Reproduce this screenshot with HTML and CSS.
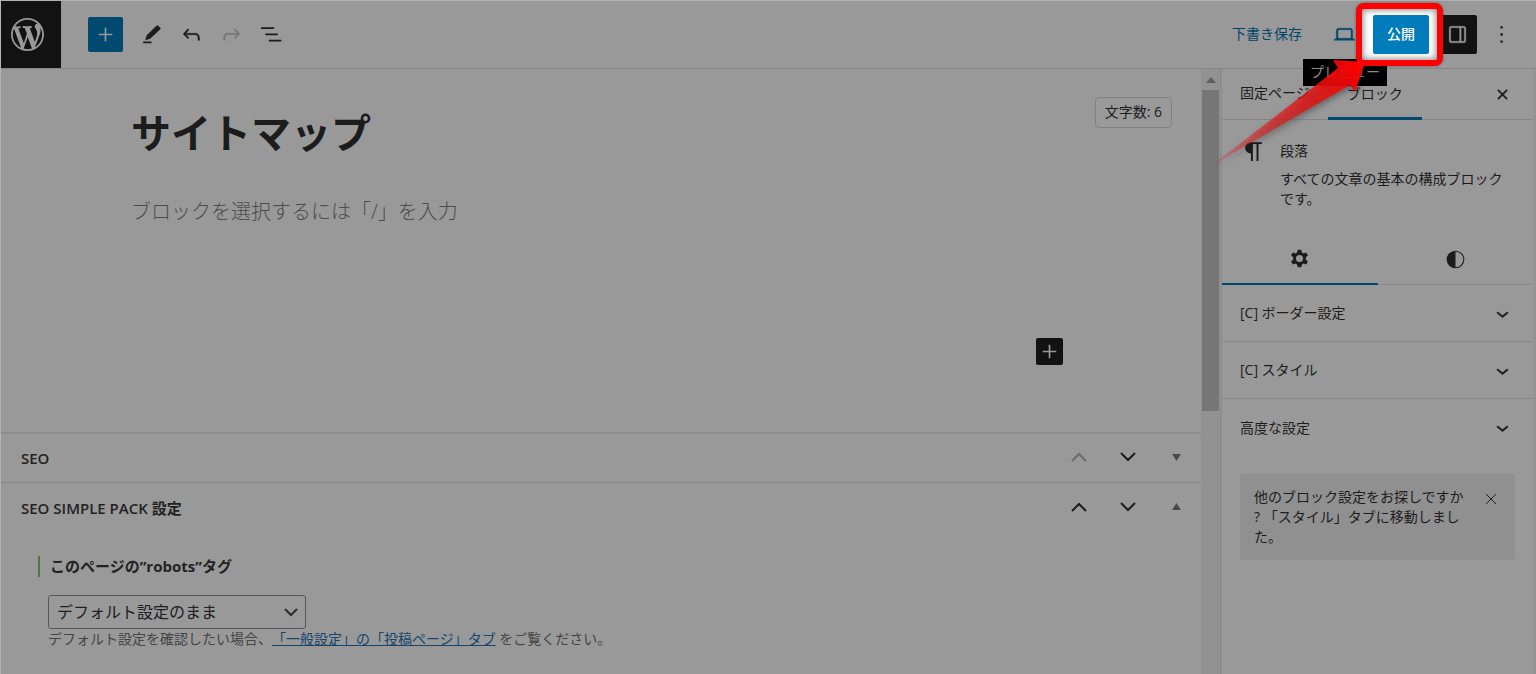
FILE: index.html
```html
<!DOCTYPE html>
<html lang="ja">
<head>
<meta charset="utf-8">
<title>サイトマップ</title>
<link rel="stylesheet" href="styles.css">
</head>
<body>
<div class="app">
  <header class="header">
    <a class="wp-logo" href="#" aria-label="WordPress"><svg viewBox="0 0 20 20"><path d="M20 10c0-5.51-4.49-10-10-10C4.48 0 0 4.49 0 10c0 5.52 4.48 10 10 10 5.51 0 10-4.48 10-10zM7.78 15.37L4.37 6.22c.55-.02 1.17-.08 1.17-.08.5-.06.44-1.13-.06-1.11 0 0-1.45.11-2.37.11-.18 0-.37 0-.58-.01C4.12 2.69 6.87 1.11 10 1.11c2.33 0 4.45.87 6.05 2.34-.68-.11-1.65.39-1.65 1.58 0 .74.45 1.36.9 2.1.35.61.55 1.36.55 2.46 0 1.49-1.4 5-1.4 5l-3.03-8.37c.54-.02.82-.17.82-.17.5-.05.44-1.25-.06-1.22 0 0-1.44.12-2.38.12-.87 0-2.33-.12-2.33-.12-.5-.03-.56 1.2-.06 1.22l.92.08 1.26 3.41zM17.41 10c.24-.64.74-1.87.43-4.25.7 1.29 1.05 2.71 1.05 4.25 0 3.29-1.73 6.24-4.4 7.78.97-2.59 1.94-5.2 2.92-7.78zM6.1 18.09C3.12 16.65 1.11 13.53 1.11 10c0-1.3.23-2.48.72-3.59C3.25 10.3 4.67 14.2 6.1 18.09zm4.03-6.63l2.58 6.98c-.86.29-1.76.45-2.71.45-.79 0-1.57-.11-2.29-.33.81-2.38 1.62-4.74 2.42-7.1z"/></svg></a>
    <div class="tools">
      <button class="inserter" aria-label="ブロック挿入"><svg class="icon" viewBox="0 0 24 24"><path d="M18.500 11.200h-5.700V5.500h-1.600v5.700H5.500v1.600h5.700v5.700h1.600v-5.700h5.700z"/></svg></button>
      <button class="tool" aria-label="ツール"><svg class="icon" viewBox="0 0 24 24"><path d="M21 6.200l-3-3.200-1.800 1L7.400 12.800l-1.400 4.600 4.600-1.400L19.700 7.600zM12 18.700H4v1.700h8z"/></svg></button>
      <button class="tool" aria-label="元に戻す"><svg class="icon" viewBox="0 0 24 24"><path d="M18.3 11.7c-.6-.6-1.4-.9-2.3-.9H6.700l2.900-3.300-1.100-1-4.500 5L8.500 16l1-1-2.700-2.700H16c.5 0 .9.2 1.300.5 1 1 1 3.400 1 4.500v.3h1.500v-.2c0-1.500 0-4.300-1.500-5.700z" stroke="currentColor" stroke-width=".4"/></svg></button>
      <button class="tool tool-off" aria-label="やり直す" disabled><svg class="icon" viewBox="0 0 24 24"><path d="M15.600 6.500l-1.100 1 2.900 3.300H8c-.9 0-1.700.3-2.300.9-1.400 1.500-1.400 4.200-1.400 5.600v.2h1.500v-.3c0-1.100 0-3.500 1-4.500.3-.3.7-.5 1.300-.5h9.200L14.500 15l1.100 1.100 4.600-4.600-4.600-5z" stroke="currentColor" stroke-width=".4"/></svg></button>
      <button class="tool" aria-label="リスト表示"><svg class="icon" viewBox="0 0 24 24"><path d="M2 5.100H14.500v1.700H2zM6 11.100h12v1.700H6zM9.500 17.100h12v1.700H9.500z"/></svg></button>
    </div>
    <div class="actions">
      <button class="save">下書き保存</button>
      <div class="preview">
        <button class="preview-button" aria-label="プレビュー"><svg class="icon" viewBox="0 0 24 24"><path d="M20.5 16h-.7V8c0-1.100-.9-2-2-2H6.200c-1.100 0-2 .9-2 2v8h-.7c-.8 0-1.500.7-1.500 1.500h20c0-.8-.7-1.500-1.500-1.500zM5.700 8c0-.3.2-.5.5-.5h11.600c.3 0 .5.2.5.5v7.600H5.700V8z" stroke="currentColor" stroke-width=".4"/></svg></button>
        <span class="tooltip">プレビュー</span>
      </div>
      <div class="callout">
        <button class="publish">公開</button>
        <svg class="arrow" viewBox="0 0 170 126" aria-hidden="true">
          <defs>
            <linearGradient id="fade" gradientUnits="userSpaceOnUse" x1="5" y1="116" x2="158" y2="12">
              <stop offset="0" stop-color="#e61414" stop-opacity=".15"/>
              <stop offset=".3" stop-color="#e61414" stop-opacity=".55"/>
              <stop offset=".7" stop-color="#e61010" stop-opacity=".85"/>
              <stop offset="1" stop-color="#ff0000"/>
            </linearGradient>
          </defs>
          <path d="M6 115 L133 17 L128 9 L160 11 L150 41 L145 34 Z" fill="url(#fade)"/>
        </svg>
      </div>
      <button class="panel-toggle" aria-label="設定"><svg class="icon" viewBox="0 0 24 24"><path d="M18 4H6c-1.100 0-2 .9-2 2v12c0 1.100.9 2 2 2h12c1.100 0 2-.9 2-2V6c0-1.100-.9-2-2-2zm-4 14.500H6c-.3 0-.5-.2-.5-.5V6c0-.3.2-.5.5-.5h8v13zm4.500-.5c0 .3-.2.5-.5.5h-2.500v-13H18c.3 0 .5.2.5.5v12z" stroke="currentColor" stroke-width=".3"/></svg></button>
      <button class="more" aria-label="オプション"><svg class="icon" viewBox="0 0 24 24"><path d="M11 4h2.200v2.200H11zM11 10.900h2.200v2.200H11zM11 17.800h2.200V20H11z"/></svg></button>
    </div>
  </header>

  <div class="body">
    <main class="editor">
      <section class="canvas">
        <div class="title-row">
          <h1 class="title">サイトマップ</h1>
          <span class="count">文字数: 6</span>
        </div>
        <p class="placeholder">ブロックを選択するには「/」を入力</p>
        <button class="add" aria-label="ブロックを追加"><svg class="icon" viewBox="0 0 24 24"><path d="M18.500 11.200h-5.700V5.500h-1.600v5.700H5.500v1.600h5.700v5.700h1.600v-5.700h5.700z"/></svg></button>
      </section>

      <section class="metabox">
        <h2 class="metabox-title">SEO</h2>
        <button class="move move-off" aria-label="上に移動" disabled><svg viewBox="0 0 18 18"><path d="M2 13l7-7 7 7"/></svg></button>
        <button class="move" aria-label="下に移動"><svg viewBox="0 0 18 18"><path d="M2 5l7 7 7-7"/></svg></button>
        <button class="fold" aria-label="開く"><svg viewBox="0 0 10 8"><path d="M0 0h10L5 8z"/></svg></button>
      </section>

      <section class="metabox">
        <h2 class="metabox-title">SEO SIMPLE PACK 設定</h2>
        <button class="move" aria-label="上に移動"><svg viewBox="0 0 18 18"><path d="M2 13l7-7 7 7"/></svg></button>
        <button class="move" aria-label="下に移動"><svg viewBox="0 0 18 18"><path d="M2 5l7 7 7-7"/></svg></button>
        <button class="fold" aria-label="閉じる"><svg viewBox="0 0 10 8"><path d="M0 8h10L5 0z"/></svg></button>
      </section>
      <div class="fields">
        <label class="field-label" for="robots">このページの”robots”タグ</label>
        <div class="field">
          <div class="select-wrap">
            <select id="robots" class="select"><option>デフォルト設定のまま</option></select>
            <svg class="select-arrow" viewBox="0 0 14 14"><path d="M1 4l6 6 6-6"/></svg>
          </div>
          <p class="help">デフォルト設定を確認したい場合、<a href="#">「一般設定」の「投稿ページ」タブ</a> をご覧ください。</p>
        </div>
      </div>
    </main>

    <div class="scrollbar" aria-hidden="true">
      <svg class="scroll-arrow" viewBox="0 0 10 6"><path d="M0 6h10L5 0z"/></svg>
      <div class="thumb"></div>
    </div>

    <aside class="sidebar">
      <div class="tabs">
        <button class="tab">固定ページ</button>
        <button class="tab tab-on">ブロック</button>
        <button class="close" aria-label="閉じる"><svg viewBox="0 0 12 12"><path d="M1 1l10 10M11 1L1 11"/></svg></button>
      </div>
      <div class="card">
        <svg class="icon" viewBox="0 0 24 24"><path d="M20 3H10C6.700 3 4 5.300 4 8.400s2.500 5.400 5.500 5.400V21h1.900V4.700h3.500V21h1.900V4.700H20z"/></svg>
        <div>
          <h2 class="card-title">段落</h2>
          <p class="card-text">すべての文章の基本の構成ブロックです。</p>
        </div>
      </div>
      <div class="modes">
        <button class="mode mode-on" aria-label="設定"><svg class="icon" viewBox="0 0 24 24"><path fill-rule="evenodd" d="M10.300 3.500h3.400l.5 2.600 1.700 1 2.500-.9 1.700 3-2 1.700v2.200l2 1.700-1.700 3-2.500-.9-1.700 1-.5 2.600h-3.400l-.5-2.600-1.700-1-2.500.9-1.700-3 2-1.700v-2.200l-2-1.700 1.700-3 2.500.9 1.700-1zM12 8.600a3.400 3.400 0 1 0 0 6.800 3.400 3.400 0 0 0 0-6.800z"/></svg></button>
        <button class="mode" aria-label="スタイル"><svg class="icon" viewBox="0 0 24 24"><path d="M12 3.500a8.500 8.500 0 1 0 0 17 8.500 8.500 0 0 0 0-17zm0 16v-15a7.500 7.500 0 0 1 0 15z"/></svg></button>
      </div>
      <button class="panel">[C] ボーダー設定<svg class="icon" viewBox="0 0 24 24"><path d="M17.500 11.600L12 16l-5.500-4.400.9-1.200L12 14l4.500-3.600 1 1.200z" stroke="currentColor" stroke-width=".4"/></svg></button>
      <button class="panel">[C] スタイル<svg class="icon" viewBox="0 0 24 24"><path d="M17.500 11.600L12 16l-5.500-4.400.9-1.200L12 14l4.500-3.600 1 1.200z" stroke="currentColor" stroke-width=".4"/></svg></button>
      <button class="panel panel-last">高度な設定<svg class="icon" viewBox="0 0 24 24"><path d="M17.500 11.600L12 16l-5.500-4.400.9-1.200L12 14l4.500-3.600 1 1.200z" stroke="currentColor" stroke-width=".4"/></svg></button>
      <div class="notice">
        <p>他のブロック設定をお探しですか<br>? 「スタイル」タブに移動しまし<br>た。</p>
        <button class="notice-close" aria-label="閉じる"><svg viewBox="0 0 12 12"><path d="M1 1l10 10M11 1L1 11"/></svg></button>
      </div>
    </aside>
  </div>
</div>
</body>
</html>
```

FILE: styles.css
```css
* {
  box-sizing: border-box;
}

body {
  margin: 0;
  background: #999;
  color: #1c1c1c;
  font: 14px/20px "Open Sans", "Noto Sans CJK JP", sans-serif;
  text-spacing-trim: space-all;
}

button {
  display: flex;
  align-items: center;
  justify-content: center;
  margin: 0;
  padding: 0;
  border: 0;
  background: none;
  color: inherit;
  font: inherit;
}

h1,
h2,
p {
  margin: 0;
}

svg {
  display: block;
  fill: currentColor;
}

.icon {
  width: 25px;
  height: 25px;
  flex: none;
}

.app {
  display: flex;
  flex-direction: column;
  min-height: 100vh;
  border-top: 1px solid #b0b0b0;
  border-left: 1px solid #b4b4b4;
}

.header {
  display: flex;
  align-items: center;
  height: 68px;
  padding-bottom: 1px;
  border-bottom: 1px solid #868686;
}

.wp-logo {
  display: flex;
  align-items: center;
  align-self: flex-start;
  justify-content: center;
  width: 60px;
  height: 67px;
  padding-right: 7px;
  background: #121212;
  color: #999;
}

.wp-logo svg {
  width: 33px;
  height: 33px;
}

.tools {
  display: flex;
  align-items: center;
  flex: 1;
  gap: 4px;
  padding-left: 27px;
}

.inserter {
  width: 35px;
  height: 35px;
  margin-right: 6px;
  border-radius: 2px;
  background: #004a70;
  color: #999;
}

.tool {
  width: 36px;
  height: 36px;
}

.tool-off {
  color: #787878;
}

.actions {
  display: flex;
  align-items: center;
}

.save {
  margin-right: 26px;
  color: #00466b;
}

.preview {
  position: relative;
  margin-right: 13px;
}

.preview-button {
  width: 32px;
  height: 36px;
  color: #00466b;
}

.tooltip {
  position: absolute;
  z-index: 1;
  top: 43px;
  left: -25px;
  width: 84px;
  padding: 3px 0 4px;
  background: #000;
  color: #8c8c8c;
  font-size: 14px;
  text-align: center;
}

/* Red frame and arrow that point at the publish button. */
.callout {
  position: relative;
  z-index: 2;
}

.callout::before {
  content: "";
  position: absolute;
  inset: -12px -14px -12px -17px;
  border: 6px solid #f00;
  border-radius: 8px;
  background: #fff;
  box-shadow: inset 0 0 6px 1px #888, 0 0 3px rgba(0, 0, 0, .4);
}

.publish {
  position: relative;
  width: 56px;
  height: 39px;
  border-radius: 2px;
  background: #007cba;
  color: #fff;
  font-weight: 500;
}

.arrow {
  position: absolute;
  top: 36px;
  left: -168px;
  width: 170px;
  height: 126px;
  filter: drop-shadow(1px 3px 3px rgba(0, 0, 0, .4));
  pointer-events: none;
}

.panel-toggle {
  width: 40px;
  height: 39px;
  margin-left: 8px;
  border-radius: 2px;
  background: #121212;
  color: #999;
}

.more {
  width: 24px;
  height: 36px;
  margin: 0 23px 0 12px;
}

.body {
  display: flex;
  flex: 1;
}

.editor {
  flex: 1;
  min-width: 0;
}

.canvas {
  height: 365px;
  padding: 28px 29px 0 130px;
  border-bottom: 2px solid #8c8c8c;
}

.title-row {
  display: flex;
  align-items: flex-start;
  justify-content: space-between;
}

.title {
  padding-top: 6px;
  font-size: 40px;
  line-height: 60px;
}

.count {
  padding: 4px 9px 5px;
  border: 1px solid #828282;
  border-radius: 4px;
}

.placeholder {
  padding-top: 34px;
  color: #4c4c4c;
  font-size: 20px;
  font-weight: 300;
  line-height: 30px;
}

.add {
  width: 27px;
  height: 27px;
  margin: 111px 109px 0 auto;
  border-radius: 2px;
  background: #121212;
  color: #999;
}

.metabox {
  display: flex;
  align-items: center;
  height: 48px;
  padding-right: 17px;
}

.metabox + .metabox {
  height: 50px;
  border-top: 1px solid #868686;
}

.metabox-title {
  flex: 1;
  padding-left: 20px;
  color: #222;
  font-size: 15px;
  font-weight: 600;
}

.move {
  width: 49px;
  height: 40px;
  padding-bottom: 2px;
}

.move svg {
  width: 18px;
  height: 18px;
  fill: none;
  stroke: currentColor;
  stroke-width: 2;
}

.move-off {
  color: #6c6c6c;
}

.fold {
  width: 16px;
  height: 40px;
  padding-bottom: 2px;
  margin-left: 16px;
  color: #474a4d;
}

.fold svg {
  width: 9px;
  height: 7px;
}

.fields {
  padding: 24px 20px 20px 37px;
}

.field-label {
  display: block;
  padding-left: 10px;
  border-left: 2px solid #55704f;
  color: #222;
  font-size: 15px;
  font-weight: 700;
  line-height: 21px;
}

.field {
  padding: 18px 0 0 10px;
}

.select-wrap {
  position: relative;
  width: 258px;
}

.select {
  appearance: none;
  display: block;
  width: 100%;
  height: 34px;
  padding: 0 30px 0 8px;
  border: 1px solid #545658;
  border-radius: 3px;
  background: #999;
  color: #1c2024;
  font: inherit;
  font-size: 16px;
}

.select-arrow {
  position: absolute;
  top: 10px;
  right: 8px;
  width: 14px;
  height: 14px;
  fill: none;
  stroke: #2a2c2e;
  stroke-width: 2;
  pointer-events: none;
}

.help {
  color: #444;
}

.help a {
  color: #15456b;
}

.scrollbar {
  display: flex;
  flex-direction: column;
  align-items: center;
  width: 21px;
  padding-top: 8px;
  border-right: 2px solid #8d8d8d;
  background: #929292;
}

.scroll-arrow {
  width: 10px;
  height: 6px;
  color: #5f5f5f;
}

.thumb {
  width: 17px;
  height: 321px;
  margin-top: 7px;
  background: #767676;
}

.sidebar {
  width: 314px;
  border-right: 3px solid #939393;
}

.tabs {
  display: flex;
  align-items: stretch;
  height: 51px;
  border-bottom: 1px solid #868686;
}

.tab {
  padding: 0 18px 2px;
}

.tab-on {
  padding: 1px 19px 0;
  margin-bottom: -1px;
  border-bottom: 3px solid #004a70;
}

.close {
  width: 24px;
  margin: 0 19px 0 auto;
}

.close svg {
  width: 11px;
  height: 11px;
  stroke: currentColor;
  stroke-width: 2;
}

.card {
  display: flex;
  gap: 14px;
  padding: 19px 18px 25px 19px;
}

.card-title {
  padding-top: 2px;
  font-size: 14px;
  font-weight: 400;
}

.card-text {
  padding-top: 8px;
}

.modes {
  display: flex;
  height: 51px;
  border-bottom: 1px solid #8a8a8a;
}

.mode {
  flex: 1;
}

.mode-on {
  margin-bottom: -1px;
  border-bottom: 2px solid #004a70;
}

.panel {
  justify-content: space-between;
  width: 100%;
  height: 57px;
  padding: 0 18px;
  border-bottom: 1px solid #868686;
}

.panel-last {
  border-bottom: 0;
}

.notice {
  display: flex;
  justify-content: space-between;
  margin: 18px 18px 0;
  padding: 13px 12px 13px 14px;
  border-radius: 2px;
  background: #909090;
}

.notice-close {
  width: 24px;
  height: 24px;
}

.notice-close svg {
  width: 12px;
  height: 12px;
  stroke: currentColor;
  stroke-width: 1;
}
```
